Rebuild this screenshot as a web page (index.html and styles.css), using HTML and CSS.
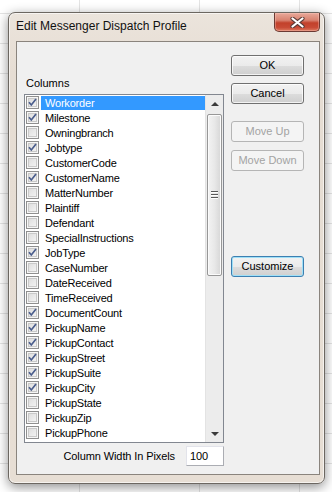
FILE: index.html
```html
<!DOCTYPE html>
<html lang="en">
  <head>
    <meta charset="UTF-8" />
    <title>Edit Messenger Dispatch Profile</title>
    <link rel="stylesheet" href="styles.css">
  </head>
  <body>
    <div class="window">
      <div class="titlebar">
        <div class="title">Edit Messenger Dispatch Profile</div>
        <div class="close">
          <svg width="17" height="11" viewBox="0 0 17 11">
            <path d="M3.5 1.5 L13.5 9.5 M13.5 1.5 L3.5 9.5" stroke="#5a3a36" stroke-width="4.2" stroke-linecap="round"/>
            <path d="M3.5 1.5 L13.5 9.5 M13.5 1.5 L3.5 9.5" stroke="#ffffff" stroke-width="2.2" stroke-linecap="round"/>
          </svg>
        </div>
      </div>

      <div class="client">
        <!-- Columns list -->
        <div class="left">
          <div class="label">Columns</div>
          <div class="listbox">
            <div class="items" id="items"></div>
            <div class="scrollbar">
              <div class="arrow up"></div>
              <div class="thumb"><span></span><span></span><span></span></div>
              <div class="track"></div>
              <div class="arrow down"></div>
            </div>
          </div>
          <div class="width-row">
            <span>Column Width In Pixels</span>
            <div class="textbox">100</div>
          </div>
        </div>

        <!-- Buttons -->
        <div class="buttons">
          <div class="btn ok">OK</div>
          <div class="btn cancel">Cancel</div>
          <div class="btn disabled up-btn">Move Up</div>
          <div class="btn disabled">Move Down</div>
          <div class="btn focused customize">Customize</div>
        </div>
      </div>
    </div>

    <script>
      const columns = [
        ["Workorder", 1], ["Milestone", 1], ["Owningbranch", 0], ["Jobtype", 1],
        ["CustomerCode", 0], ["CustomerName", 1], ["MatterNumber", 0], ["Plaintiff", 0],
        ["Defendant", 0], ["SpecialInstructions", 0], ["JobType", 1], ["CaseNumber", 0],
        ["DateReceived", 0], ["TimeReceived", 0], ["DocumentCount", 1], ["PickupName", 1],
        ["PickupContact", 1], ["PickupStreet", 1], ["PickupSuite", 1], ["PickupCity", 1],
        ["PickupState", 0], ["PickupZip", 0], ["PickupPhone", 0]
      ];
      const list = document.getElementById("items");
      const tick = '<svg width="11" height="11" viewBox="0 0 11 11"><path d="M2 5.2 L4.3 8 L9 2" fill="none" stroke="#4a5d8c" stroke-width="1.7"/></svg>';

      columns.forEach(function (c, i) {
        const row = document.createElement("div");
        row.className = "row";
        const box = document.createElement("div");
        box.className = "cb";
        if (c[1]) box.innerHTML = tick;
        const text = document.createElement("div");
        text.className = i === 0 ? "text selected" : "text";
        text.innerText = c[0];
        row.appendChild(box);
        row.appendChild(text);
        list.appendChild(row);
      });
    </script>
  </body>
</html>
```

FILE: styles.css
```css
body {
  margin: 0;
  padding: 12px 0 0 8px;
  width: 332px;
  height: 492px;
  box-sizing: border-box;
  overflow: hidden;
  font-family: "Liberation Sans", Arial, sans-serif;
  font-size: 11px;
  color: #000;
  background-color: #fff;
  background-image:
    linear-gradient(to right, transparent 79px, #e4e4e4 79px, #e4e4e4 80px, transparent 80px,
      transparent 199px, #e4e4e4 199px, #e4e4e4 200px, transparent 200px,
      transparent 299px, #e4e4e4 299px, #e4e4e4 300px, transparent 300px),
    repeating-linear-gradient(to bottom, transparent 0, transparent 13px, #e4e4e4 13px, #e4e4e4 14px, transparent 14px, transparent 30px);
}

.window {
  width: 317px;
  height: 472px;
  box-sizing: border-box;
  border: 1px solid #6c6761;
  border-radius: 7px;
  background: linear-gradient(to bottom, #ebe4dc, #e6ddd3 60px, #e7ded4);
  box-shadow: 0 3px 12px rgba(0, 0, 0, 0.45), inset 0 0 0 1px rgba(255, 255, 255, 0.6);
  padding: 0 4px 8px 7px;
  display: flex;
  flex-direction: column;
}

.titlebar {
  height: 28px;
  display: flex;
  justify-content: space-between;
  align-items: flex-start;
}

.title {
  margin-top: 6px;
  font-size: 12px;
  line-height: 15px;
  color: #111;
}

.close {
  width: 46px;
  height: 19px;
  box-sizing: border-box;
  border: 1px solid #6b3a33;
  border-top: none;
  border-radius: 0 0 5px 5px;
  background: linear-gradient(to bottom, #e9a99a 0%, #d88270 40%, #c2412b 55%, #c84a35 80%, #dc7a5f 100%);
  box-shadow: inset 0 0 0 1px rgba(255, 210, 200, 0.35);
  display: flex;
  justify-content: center;
  align-items: center;
}

.client {
  flex: 1;
  border: 1px solid #8a847d;
  background: #f0f0f0;
  display: flex;
  gap: 7px;
  padding-left: 7px;
}

.left {
  width: 200px;
  padding-top: 35px;
}

.label {
  line-height: 13px;
  padding-left: 2px;
}

.listbox {
  margin-top: 4px;
  height: 349px;
  box-sizing: border-box;
  border: 1px solid #828790;
  background: #fff;
  display: flex;
}

.items {
  flex: 1;
  padding-top: 1px;
}

.row {
  height: 15px;
  display: flex;
  align-items: flex-start;
}

.cb {
  width: 13px;
  height: 13px;
  box-sizing: border-box;
  margin-left: 1px;
  border: 1px solid #8f8f8f;
  background: linear-gradient(135deg, #d9d9d9, #f7f7f7);
  box-shadow: inset 0 0 0 1px #f6f6f6, inset 0 0 0 2px #c9c9c9;
}

.cb svg {
  display: block;
}

.text {
  margin-left: 2px;
  width: 160px;
  height: 14px;
  line-height: 14px;
  padding-left: 4px;
  letter-spacing: -0.2px;
  white-space: nowrap;
}

.selected {
  background: #3399ff;
  color: #fff;
}

.scrollbar {
  width: 17px;
  background: #ececec;
  border-left: 1px solid #e3e3e3;
  display: flex;
  flex-direction: column;
  align-items: center;
}

.arrow {
  height: 17px;
  width: 17px;
  display: flex;
  justify-content: center;
  align-items: center;
}

.arrow::after {
  content: "";
  border-left: 4px solid transparent;
  border-right: 4px solid transparent;
}

.up::after {
  border-bottom: 4px solid #3a3a3a;
}

.down::after {
  border-top: 4px solid #3a3a3a;
}

.thumb {
  margin-top: 2px;
  width: 15px;
  height: 162px;
  box-sizing: border-box;
  border: 1px solid #979797;
  border-radius: 2px;
  background: linear-gradient(to right, #f3f3f3, #e8e8e8 50%, #d6d6d6);
  box-shadow: inset 0 0 0 1px #fbfbfb;
  display: flex;
  flex-direction: column;
  justify-content: center;
  align-items: center;
  gap: 1px;
}

.thumb span {
  width: 7px;
  height: 1px;
  background: #5a5a5a;
  border-bottom: 1px solid #fff;
}

.track {
  flex: 1;
}

.width-row {
  margin-top: 3px;
  display: flex;
  justify-content: flex-end;
  align-items: center;
  gap: 11px;
  letter-spacing: -0.1px;
}

.textbox {
  width: 38px;
  height: 20px;
  box-sizing: border-box;
  border: 1px solid #abadb3;
  border-top-color: #e2e3ea;
  border-left-color: #e2e3ea;
  background: #fff;
  line-height: 18px;
  padding-left: 3px;
}

.buttons {
  width: 73px;
  padding-top: 13px;
  display: flex;
  flex-direction: column;
}

.btn {
  height: 21px;
  box-sizing: border-box;
  border: 1px solid #707070;
  border-radius: 3px;
  background: linear-gradient(to bottom, #f2f2f2 0%, #ebebeb 50%, #dddddd 51%, #cfcfcf 100%);
  box-shadow: inset 0 0 0 1px rgba(255, 255, 255, 0.75);
  text-align: center;
  line-height: 19px;
}

.cancel {
  margin-top: 7px;
}

.up-btn {
  margin-top: 17px;
}

.disabled {
  margin-bottom: 8px;
  border-color: #b5b5b5;
  background: #f4f4f4;
  box-shadow: none;
  color: #a3a3a3;
}

.customize {
  margin-top: 77px;
}

.focused {
  border-color: #3c7fb1;
  box-shadow: inset 0 0 0 1px #9fe0f7;
}
```
